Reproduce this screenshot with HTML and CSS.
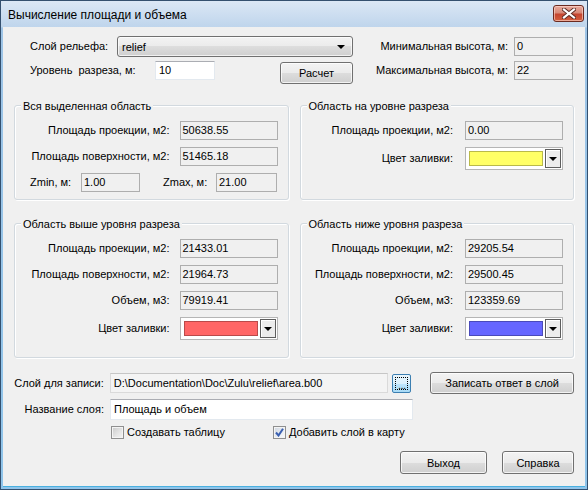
FILE: index.html
```html
<!DOCTYPE html>
<html lang="ru">
<head>
<meta charset="utf-8">
<title>Вычисление площади и объема</title>
<link rel="stylesheet" href="styles.css">
</head>
<body>
<div class="window">
  <div class="titlebar">
    <span class="title">Вычисление площади и объема</span>
    <div class="close">
      <svg width="14" height="11" viewBox="0 0 14 11"><path d="M2 1.5 L12 9.5 M12 1.5 L2 9.5" stroke="#5a2a22" stroke-width="4" stroke-linecap="square"/><path d="M2 1.5 L12 9.5 M12 1.5 L2 9.5" stroke="#fff" stroke-width="2.2" stroke-linecap="square"/></svg>
    </div>
  </div>
  <div class="client">
    <div class="top">
      <div class="row r1">
        <span class="lbl w87">Слой рельефа:</span>
        <div class="combo"><span>relief</span><i class="tri"></i></div>
        <span class="lbl push">Минимальная высота, м:</span>
        <div class="ro short">0</div>
      </div>
      <div class="row r2">
        <span class="lbl w125">Уровень&nbsp; разреза, м:</span>
        <div class="edit lvl">10</div>
        <div class="btn calc">Расчет</div>
        <span class="lbl push">Максимальная высота, м:</span>
        <div class="ro short">22</div>
      </div>
    </div>

    <div class="groups first">
      <div class="group">
        <div class="gtitle">Вся выделенная область</div>
        <div class="grid g-left">
          <span class="lbl r">Площадь проекции, м2:</span>
          <div class="ro">50638.55</div>
          <span class="lbl r">Площадь поверхности, м2:</span>
          <div class="ro">51465.18</div>
          <div class="zrow">
            <span class="lbl zl">Zmin, м:</span>
            <div class="ro zf1">1.00</div>
            <span class="lbl zl2">Zmax, м:</span>
            <div class="ro zf2">21.00</div>
          </div>
        </div>
      </div>
      <div class="group">
        <div class="gtitle">Область на уровне разреза</div>
        <div class="grid g-right">
          <span class="lbl r">Площадь проекции, м2:</span>
          <div class="ro">0.00</div>
          <span class="lbl r">Цвет заливки:</span>
          <div class="colorbox"><span class="swatch yellow"></span><span class="drop"><i class="tri"></i></span></div>
        </div>
      </div>
    </div>

    <div class="groups second">
      <div class="group">
        <div class="gtitle">Область выше уровня разреза</div>
        <div class="grid g-left">
          <span class="lbl r">Площадь проекции, м2:</span>
          <div class="ro">21433.01</div>
          <span class="lbl r">Площадь поверхности, м2:</span>
          <div class="ro">21964.73</div>
          <span class="lbl r">Объем, м3:</span>
          <div class="ro">79919.41</div>
          <span class="lbl r">Цвет заливки:</span>
          <div class="colorbox"><span class="swatch red"></span><span class="drop"><i class="tri"></i></span></div>
        </div>
      </div>
      <div class="group">
        <div class="gtitle">Область ниже уровня разреза</div>
        <div class="grid g-right">
          <span class="lbl r">Площадь проекции, м2:</span>
          <div class="ro">29205.54</div>
          <span class="lbl r">Площадь поверхности, м2:</span>
          <div class="ro">29500.45</div>
          <span class="lbl r">Объем, м3:</span>
          <div class="ro">123359.69</div>
          <span class="lbl r">Цвет заливки:</span>
          <div class="colorbox"><span class="swatch blue"></span><span class="drop"><i class="tri"></i></span></div>
        </div>
      </div>
    </div>

    <div class="bottom">
      <div class="brow b1">
        <span class="lbl blbl">Слой для записи:</span>
        <div class="path">D:\Documentation\Doc\Zulu\relief\area.b00</div>
        <div class="dots"><span class="focus">...</span></div>
        <div class="btn write">Записать ответ в слой</div>
      </div>
      <div class="brow b2">
        <span class="lbl blbl">Название слоя:</span>
        <div class="edit name">Площадь и объем</div>
      </div>
      <div class="brow b3">
        <label class="chk c1"><span class="box"></span><span>Создавать таблицу</span></label>
        <label class="chk c2"><span class="box checked"><svg width="9" height="9" viewBox="0 0 9 9"><path d="M1 4.5 L3.5 7.5 L8 0.8" fill="none" stroke="#3a5fb0" stroke-width="2"/></svg></span><span>Добавить слой в карту</span></label>
      </div>
      <div class="brow b4">
        <div class="btn exit">Выход</div>
        <div class="btn help">Справка</div>
      </div>
    </div>
  </div>
</div>
</body>
</html>
```
FILE: styles.css
```css
* { box-sizing: border-box; }
html, body { margin: 0; padding: 0; background: #fff; }
body {
  font-family: "Liberation Sans", Arial, sans-serif;
  font-size: 11px;
  color: #000;
}
.window {
  width: 588px;
  height: 490px;
  border: 1px solid #34506f;
  background: linear-gradient(#dbe7f5 0px, #bfd5ec 26px, #9ec4e6 27px, #8fc4ea 100%);
  display: flex;
  flex-direction: column;
}
.titlebar {
  height: 26px;
  display: flex;
  align-items: flex-start;
  justify-content: space-between;
  padding: 0 3px 0 7px;
}
.title {
  font-size: 12px;
  line-height: 14px;
  margin-top: 7px;
  color: #000;
}
.close {
  width: 31px;
  height: 17px;
  margin-top: 4px;
  border: 1px solid #6b2a20;
  border-radius: 3px;
  background: linear-gradient(#e9a99c 0%, #d88a78 45%, #c5452f 55%, #d4603f 100%);
  box-shadow: inset 0 0 0 1px rgba(255,220,210,0.6);
  display: flex;
  align-items: center;
  justify-content: center;
}
.client {
  flex: 1;
  margin: 0 2px 2px 2px;
  background: #f0f0f0;
  border-bottom: 1px solid #49b0e0;
  display: flex;
  flex-direction: column;
}
.lbl { line-height: 19px; white-space: nowrap; }
.r { text-align: right; }

/* top */
.top { padding: 9px 12px 0 27px; }
.row { display: flex; }
.r1 { height: 21px; align-items: center; }
.r2 { margin-top: 4px; align-items: flex-start; }
.w87 { width: 87px; }
.w125 { width: 125px; }
.push { margin-left: auto; margin-right: 6px; }
.r1 .push { margin-top: -1px; }
.combo {
  width: 236px;
  height: 21px;
  border: 1px solid #707070;
  border-radius: 3px;
  background: linear-gradient(#f3f3f3 0%, #ebebeb 50%, #dddddd 50%, #cfcfcf 100%);
  box-shadow: inset 0 0 0 1px rgba(255,255,255,0.7);
  display: flex;
  align-items: center;
  justify-content: space-between;
  padding: 0 7px 0 4px;
}
.tri {
  display: block;
  width: 0; height: 0;
  border-left: 4px solid transparent;
  border-right: 4px solid transparent;
  border-top: 4px solid #000;
}
.ro {
  height: 19px;
  border: 1px solid #aeaeae;
  background: #f0f0f0;
  line-height: 16px;
  padding-left: 2px;
  white-space: nowrap;
}
.short { width: 59px; }
.r1 .short { margin-top: -1px; }
.edit {
  height: 19px;
  background: #fff;
  border: 1px solid #e3e9ef;
  border-top-color: #abadb3;
  line-height: 17px;
  padding-left: 3px;
}
.lvl { width: 60px; }
.btn {
  height: 22px;
  border: 1px solid #707070;
  border-radius: 3px;
  background: linear-gradient(#f3f3f3 0%, #ebebeb 50%, #dddddd 50%, #cfcfcf 100%);
  box-shadow: inset 0 0 0 1px rgba(255,255,255,0.75);
  display: flex;
  align-items: center;
  justify-content: center;
  white-space: nowrap;
}
.calc { width: 73px; margin-left: 65px; margin-top: 1px; }

/* groups */
.groups { display: flex; gap: 11px; padding: 0 11px; }
.first { margin-top: 21px; }
.second { margin-top: 23px; }
.group {
  flex: 1;
  border: 1px solid #d2d9df;
  border-radius: 3px;
  box-shadow: inset 1px 1px 0 #fff, 1px 1px 0 #fff;
}
.gtitle {
  margin: -7px 0 0 6px;
  padding: 0 2px;
  width: fit-content;
  line-height: 14px;
  background: #f0f0f0;
}
.grid {
  display: grid;
  grid-template-columns: 1fr 98px;
  row-gap: 7px;
  padding-right: 10px;
  margin-top: 8px;
  align-items: center;
}
.first .group { padding-bottom: 7px; }
.second .group { padding-bottom: 17px; }
.g-left { column-gap: 10px; }
.g-right { column-gap: 12px; }
.zrow {
  grid-column: 1 / -1;
  display: flex;
  padding-left: 15px;
}
.zl { width: 51px; }
.zf1 { width: 59px; }
.zl2 { width: 53px; margin-left: 23px; }
.zf2 { width: 61px; }
.colorbox {
  height: 23px;
  border: 1px solid #b5b5b5;
  background: #fff;
  display: flex;
  align-items: center;
  padding: 0 1px 0 3px;
}
.swatch {
  width: 74px;
  height: 15px;
  border: 1px solid;
}
.yellow { background: #ffff66; border-color: #b9b94a; }
.red { background: #ff6666; border-color: #b94a4a; }
.blue { background: #6666ff; border-color: #4a4ab9; }
.drop {
  margin-left: 2px;
  width: 16px;
  height: 19px;
  border: 1px solid #5e5e5e;
  background: #ececec;
  box-shadow: inset 1px 1px 0 #fff;
  display: flex;
  align-items: center;
  justify-content: center;
}

/* bottom */
.bottom { margin-top: 14px; padding-right: 11px; }
.brow { display: flex; align-items: center; }
.blbl { width: 101px; text-align: right; margin-right: 6px; }
.path {
  width: 279px;
  height: 20px;
  border: 1px solid #dadada;
  border-top-color: #c6c6c6;
  background: #f4f4f4;
  line-height: 18px;
  padding-left: 3px;
  white-space: nowrap;
}
.dots {
  width: 19px;
  height: 19px;
  margin-left: 4px;
  border: 1px solid #3c7fb1;
  border-radius: 2px;
  background: linear-gradient(#eaf6fd 0%, #d9f0fc 50%, #bee6fd 50%, #a7d9f5 100%);
  padding: 2px;
}
.focus {
  display: flex;
  align-items: flex-end;
  justify-content: center;
  width: 100%;
  height: 100%;
  border: 1px dotted #000;
  font-size: 11px;
  line-height: 8px;
  letter-spacing: -0.5px;
  overflow: hidden;
}
.write { width: 144px; margin-left: 19px; }
.b2 { margin-top: 5px; }
.name { width: 303px; height: 21px; line-height: 19px; }
.b3 { margin-top: 6px; padding-left: 108px; }
.chk { display: flex; align-items: center; line-height: 13px; }
.c1 { width: 162px; }
.box {
  width: 13px;
  height: 13px;
  border: 1px solid #8f8f8f;
  background: linear-gradient(135deg, #c9c9c9 0%, #e6e6e6 60%, #f4f4f4 100%);
  box-shadow: inset 0 0 0 1px #f4f4f4;
  margin-right: 3px;
  display: flex;
  align-items: center;
  justify-content: center;
}
.checked { background: linear-gradient(135deg, #cfd6e0 0%, #eef1f5 70%, #fbfbfb 100%); }
.b4 { margin-top: 12px; justify-content: flex-end; gap: 15px; }
.exit { width: 87px; height: 23px; }
.help { width: 72px; height: 23px; }
```
